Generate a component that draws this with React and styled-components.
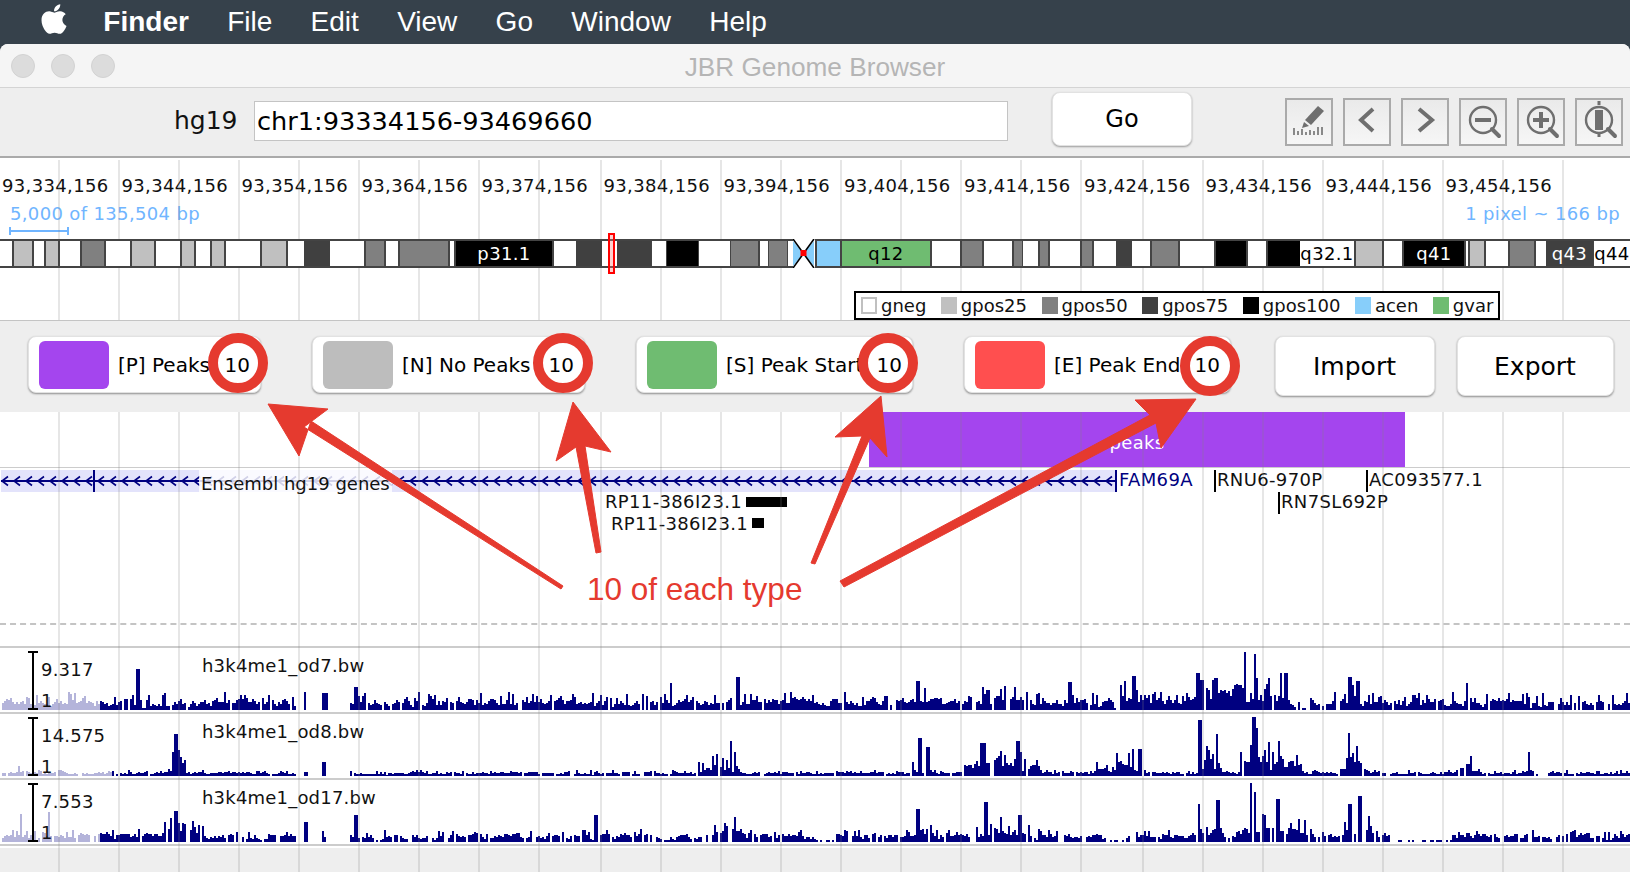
import React from "react";
import styled, { createGlobalStyle } from "styled-components";
import { FaApple } from "react-icons/fa";

const GlobalStyle = createGlobalStyle`
  html, body {
    margin: 0;
    height: 872px;
    overflow: hidden;
    background: #36414b;
  }
  * { box-sizing: border-box; }
`;

const SANS = `"DejaVu Sans", sans-serif`;
const HELV = `"Liberation Sans", Arial, sans-serif`;
const RED = "#e53a2f";

const Page = styled.div`
  width: 1630px;
  height: 872px;
  position: relative;
  overflow: hidden;
`;

const MenuBar = styled.div`
  height: 44px;
  display: flex;
  align-items: center;
  gap: 38.3px;
  padding-left: 37px;
  background: #36414b;
  color: #fff;
  font: 28px ${HELV};
  svg { margin-right: -6px; margin-top: -6px; }
`;

const MenuTitle = styled.span`
  font-weight: 700;
`;

const Window = styled.div`
  height: 828px;
  background: #fff;
  border-radius: 8px 8px 0 0;
  overflow: hidden;
`;

const TitleBar = styled.div`
  height: 44px;
  position: relative;
  display: flex;
  align-items: center;
  justify-content: center;
  background: #f5f5f5;
  border-bottom: 1px solid #d4d4d4;
  color: #b5b5b5;
  font: 26.2px ${HELV};
  padding-top: 3px;
`;

const Lights = styled.div`
  position: absolute;
  left: 11px;
  top: 10px;
  display: flex;
  gap: 16px;
`;

const Light = styled.span`
  width: 24px;
  height: 24px;
  border-radius: 50%;
  background: #dcdcdc;
  border: 1px solid #d2d2d2;
`;

const Toolbar = styled.div`
  height: 70px;
  display: flex;
  align-items: center;
  padding-left: 174px;
  background: #eee;
  border-bottom: 2px solid #aaa;
  font-family: ${SANS};
`;

const Genome = styled.span`
  font-size: 25px;
  width: 80px;
  color: #111;
  margin-bottom: 3px;
`;

const Locus = styled.div`
  width: 754px;
  height: 40px;
  display: flex;
  align-items: center;
  padding-left: 2px;
  margin-bottom: 2px;
  background: #fff;
  border: 1px solid #c4c4c4;
  font-size: 25.6px;
  color: #000;
`;

const GoButton = styled.div`
  width: 140px;
  height: 54px;
  margin: 0 0 6px 44px;
  display: flex;
  align-items: center;
  justify-content: center;
  background: #fff;
  border-radius: 8px;
  border: 1px solid #e2e2e2;
  box-shadow: 0 1px 2px rgba(0, 0, 0, 0.35);
  font-size: 24px;
  color: #000;
`;

const IconGroup = styled.div`
  display: flex;
  gap: 10px;
  margin-left: 93px;
`;

const IconButton = styled.div`
  width: 48px;
  height: 48px;
  border: 2px solid #aaa;
  background: linear-gradient(#eaeaea, #f6f6f6);
  svg { display: block; margin: -2px; }
`;

const Canvas = styled.div`
  position: relative;
  height: 714px;
  font: 18px ${SANS};
  letter-spacing: 0.35px;
  color: #111;
`;

const GridOverlay = styled.div`
  position: absolute;
  inset: 2px 0 0 0;
  z-index: 1;
  pointer-events: none;
`;

const GridLine = styled.span`
  position: absolute;
  top: 0;
  bottom: 0;
  width: 2px;
  background: rgba(128, 128, 128, 0.2);
`;

const Ruler = styled.div`
  height: 42px;
  padding: 17px 0 0 2px;
  display: flex;
  white-space: nowrap;
`;

const RulerTick = styled.span`
  flex: 0 0 ${(p) => p.$w}px;
`;

const ScaleRow = styled.div`
  position: relative;
  height: 39px;
  display: flex;
  justify-content: space-between;
  padding: 3px 10px 0 10px;
  color: #70b5ff;
`;

const ScaleBar = styled.span`
  position: absolute;
  left: 9px;
  top: 27px;
  width: 60px;
  height: 8px;
  border-left: 2px solid #70b5ff;
  border-right: 2px solid #70b5ff;
  &::after {
    content: "";
    position: absolute;
    left: 0;
    right: 0;
    top: 3px;
    height: 2px;
    background: #70b5ff;
  }
`;

const Ideogram = styled.div`
  position: relative;
  z-index: 2;
  height: 29px;
  display: flex;
  padding: 2px 0;
  background: #444;
`;

const BAND_COLORS = {
  w: ["#fff", "#000"],
  g25: ["#c0c0c0", "#000"],
  g50: ["#808080", "#000"],
  g75: ["#404040", "#fff"],
  k: ["#000", "#fff"],
  acen: ["#87cefa", "#000"],
  gvar: ["#6fbc71", "#000"],
};

const Band = styled.span`
  flex: none;
  display: flex;
  align-items: center;
  justify-content: center;
  overflow: hidden;
  white-space: nowrap;
  background: ${(p) => BAND_COLORS[p.$type][0]};
  color: ${(p) => BAND_COLORS[p.$type][1]};
`;

const Centromere = styled.svg`
  position: absolute;
  left: 793px;
  top: 0;
`;

const CytoMarker = styled.span`
  position: absolute;
  left: 608px;
  top: -6px;
  width: 7px;
  height: 41px;
  border: 2px solid #f00;
  background: rgba(255, 120, 120, 0.35);
`;

const LegendRow = styled.div`
  height: 52px;
  padding: 23px 0 0 854px;
  position: relative;
  z-index: 2;
  letter-spacing: 0;
`;

const Legend = styled.div`
  width: 646px;
  height: 29px;
  display: flex;
  align-items: center;
  padding-left: 5px;
  gap: 14.5px;
  background: #fff;
  border: 2px solid #000;
`;

const LegendItem = styled.span`
  display: flex;
  align-items: center;
  gap: 4px;
  line-height: 20px;
`;

const LegendSwatch = styled.i`
  width: 16px;
  height: 17px;
  background: ${(p) => BAND_COLORS[p.$type][0]};
  border: ${(p) => (p.$type === "w" ? "2px solid #c0c0c0" : "none")};
`;

const Panel = styled.div`
  position: relative;
  z-index: 3;
  height: 92px;
  display: flex;
  padding: 15px 0 0 28px;
  gap: 51px;
  background: #eee;
  border-top: 1px solid #c4c4c4;
  letter-spacing: 0;
`;

const PeakButton = styled.div`
  position: relative;
  width: ${(p) => p.$w}px;
  height: 57px;
  display: flex;
  align-items: center;
  padding-left: 10px;
  background: #fff;
  border-radius: 8px;
  border: 1px solid #e2e2e2;
  box-shadow: 0 1px 2px rgba(0, 0, 0, 0.4);
  font-size: 20px;
  color: #000;
  white-space: nowrap;
`;

const Swatch = styled.span`
  flex: none;
  width: 70px;
  height: 48px;
  margin-right: 9px;
  border-radius: 6px;
  background: ${(p) => p.$color};
`;

const Count = styled.span`
  position: absolute;
  right: 10px;
`;

const Ring = styled.span`
  position: absolute;
  right: ${(p) => p.$right}px;
  top: ${(p) => p.$top}px;
  width: 60px;
  height: 60px;
  border-radius: 50%;
  border: 10px solid ${RED};
`;

const ActionButton = styled.div`
  width: ${(p) => p.$w}px;
  height: 60px;
  margin-left: ${(p) => p.$ml}px;
  display: flex;
  align-items: center;
  justify-content: center;
  background: #fff;
  border-radius: 8px;
  border: 1px solid #e2e2e2;
  box-shadow: 0 1px 2px rgba(0, 0, 0, 0.4);
  font-size: 25px;
  color: #000;
`;

const PeakTrack = styled.div`
  height: 56px;
  padding-left: 869px;
  border-bottom: 1px solid #ccc;
`;

const PeakBar = styled.div`
  width: 536px;
  height: 55px;
  display: flex;
  align-items: flex-end;
  justify-content: center;
  padding-bottom: 14px;
  background: #a445ee;
  color: #fff;
`;

const GeneTrack = styled.div`
  position: relative;
  height: 157px;
  border-bottom: 2px dashed #c4c4c4;
`;

const GeneBand = styled.svg`
  position: absolute;
  left: 0;
  top: 2px;
`;

const TrackTitle = styled.span`
  position: absolute;
  left: 199px;
  top: 2px;
  width: 193px;
  padding: 4px 0 0 2px;
  height: 22px;
  line-height: 20px;
  letter-spacing: 0;
  white-space: nowrap;
  background: rgba(255, 255, 255, 0.82);
`;

const GeneLabel = styled.span`
  position: absolute;
  left: ${(p) => p.$x}px;
  top: ${(p) => p.$y}px;
  height: 22px;
  line-height: 20px;
  padding-left: ${(p) => (p.$tick ? 1 : 3)}px;
  white-space: nowrap;
  color: ${(p) => p.$color || "#111"};
  border-left: ${(p) => (p.$tick ? `2px solid ${p.$color || "#000"}` : "none")};
`;

const GeneBlock = styled.span`
  position: absolute;
  left: ${(p) => p.$x}px;
  top: ${(p) => p.$y}px;
  width: ${(p) => p.$w}px;
  height: 10px;
  background: #000;
`;

const Spacer = styled.div`
  height: 21px;
`;

const WigTrack = styled.div`
  position: relative;
  height: 66px;
  border-top: 2px solid #ccc;
  svg { display: block; position: absolute; left: 0; top: 0; }
`;

const RangeBar = styled.span`
  position: absolute;
  left: 28px;
  top: 3px;
  width: 10px;
  height: 59px;
  &::before {
    content: "";
    position: absolute;
    left: 4px;
    top: 0;
    bottom: 0;
    width: 2px;
    background: #000;
  }
  &::after {
    content: "";
    position: absolute;
    inset: 0;
    border-top: 2px solid #000;
    border-bottom: 2px solid #000;
  }
`;

const WigText = styled.span`
  position: absolute;
  left: ${(p) => p.$x}px;
  top: ${(p) => p.$y}px;
  line-height: 20px;
  letter-spacing: 0.2px;
  white-space: nowrap;
`;

const BottomBar = styled.div`
  height: 29px;
  border-top: 2px solid #ccc;
  background: linear-gradient(#fff 2px, #eee 2px);
`;

const Annotations = styled.svg`
  position: absolute;
  inset: 0;
  z-index: 5;
  pointer-events: none;
`;

const Callout = styled.div`
  position: absolute;
  left: 587px;
  top: 569px;
  z-index: 6;
  font: 31.5px/40px ${HELV};
  color: ${RED};
  white-space: nowrap;
  text-shadow: 0 0 6px #fff, 0 0 6px #fff;
`;

const TICKS = [
  "93,334,156", "93,344,156", "93,354,156", "93,364,156", "93,374,156",
  "93,384,156", "93,394,156", "93,404,156", "93,414,156", "93,424,156",
  "93,434,156", "93,444,156", "93,454,156",
];
const TICK_WIDTHS = [119.5, 120, 120, 120, 122, 120, 120.5, 120, 120, 121.5, 120, 120, 120];

const GRID_X = [
  59, 119, 179, 239, 299, 359, 419, 479, 539, 601, 661, 721, 781, 841, 901, 961,
  1021, 1081, 1143, 1203, 1263, 1323, 1383, 1443, 1503, 1563,
];

const BANDS = [
  [0, 12, "w"], [14, 32, "g25"], [34, 44, "w"], [46, 58, "g25"], [60, 80, "w"],
  [82, 104, "g50"], [106, 130, "w"], [132, 154, "g25"], [156, 180, "w"], [182, 194, "g25"],
  [196, 210, "w"], [212, 224, "g25"], [226, 260, "w"], [262, 286, "g25"], [288, 304, "w"],
  [304, 330, "g75"], [330, 364, "w"], [366, 384, "g50"], [386, 398, "w"], [400, 448, "g50"],
  [450, 454, "w"], [456, 552, "k", "p31.1"], [554, 576, "w"], [576, 602, "g75"], [602, 617, "w"],
  [617, 651, "g75"], [652, 666, "w"], [667, 698, "k"], [699, 730, "w"], [731, 758, "g50"],
  [760, 768, "w"], [769, 787, "g50"], [788, 793, "w"], [817, 840, "acen"], [842, 930, "gvar", "q12"],
  [932, 960, "w"], [962, 982, "g50"], [984, 1012, "w"], [1014, 1022, "g50"], [1023, 1038, "w"],
  [1040, 1048, "g50"], [1050, 1080, "w"], [1082, 1092, "g50"], [1094, 1116, "w"], [1116, 1132, "g75"],
  [1132, 1150, "w"], [1152, 1178, "g50"], [1180, 1214, "w"], [1216, 1246, "k"], [1248, 1266, "w"],
  [1268, 1300, "k"], [1300, 1354, "w", "q32.1"], [1356, 1382, "g25"], [1384, 1402, "w"],
  [1404, 1464, "k", "q41"], [1466, 1468, "w"], [1470, 1484, "g25"], [1486, 1508, "w"],
  [1510, 1534, "g50"], [1536, 1546, "w"], [1546, 1593, "g75", "q43"], [1594, 1630, "w", "q44"],
];

const LEGEND = [
  ["w", "gneg"], ["g25", "gpos25"], ["g50", "gpos50"], ["g75", "gpos75"],
  ["k", "gpos100"], ["acen", "acen"], ["gvar", "gvar"],
];

const PEAK_BUTTONS = [
  { w: 233, color: "#a445ee", label: "[P] Peaks", count: 10, ring: 23, top: -4 },
  { w: 273, color: "#bdbdbd", label: "[N] No Peaks", count: 10, ring: 22, top: -4 },
  { w: 277, color: "#6fbc71", label: "[S] Peak Start", count: 10, ring: 25, top: -4 },
  { w: 267, color: "#ff4f4f", label: "[E] Peak End", count: 10, ring: 21, top: -1 },
];

// rough shape of each signal track: low noise plus clusters and single spikes
const WIGGLES = [
  {
    seed: 7, name: "h3k4me1_od7.bw", max: "9.317", pale: 100, base: 17, holes: 0.08,
    clusters: [[940, 1060, 24], [1110, 1160, 30], [1190, 1300, 38], [1340, 1370, 26]],
    sparse: [[892, 895], [1113, 1118], [1300, 1308]],
    spikes: [[137, 41], [304, 18], [322, 17], [325, 17], [355, 23], [670, 27], [737, 33], [917, 29], [924, 22], [1069, 28], [1133, 34], [1124, 29], [1197, 37], [1201, 30], [1215, 32], [1244, 58], [1254, 56], [1280, 37], [1285, 37], [1349, 33], [1357, 29], [1466, 27]],
  },
  {
    seed: 23, name: "h3k4me1_od8.bw", max: "14.575", pale: 111, base: 5, holes: 0.08,
    clusters: [[8, 30, 10], [168, 185, 32], [695, 745, 22], [910, 935, 22], [962, 1040, 28], [1095, 1145, 24], [1197, 1220, 34], [1240, 1300, 42], [1340, 1365, 28], [1450, 1480, 12], [1520, 1535, 16]],
    sparse: [[1385, 1390], [1535, 1545]],
    spikes: [[172, 24], [175, 42], [177, 26], [304, 4], [306, 4], [322, 14], [324, 14], [730, 35], [734, 24], [919, 38], [927, 29], [981, 33], [984, 33], [1017, 35], [1132, 27], [1139, 27], [1199, 56], [1216, 42], [1253, 59], [1256, 48], [1348, 43], [1356, 30], [1470, 20], [1528, 24]],
  },
  {
    seed: 41, name: "h3k4me1_od17.bw", max: "7.553", pale: 99, base: 12, holes: 0.2,
    clusters: [[160, 205, 30], [700, 745, 24], [910, 935, 26], [960, 1040, 24], [1197, 1222, 24], [1240, 1310, 36], [1340, 1375, 38]],
    sparse: [[815, 835], [1110, 1125], [1390, 1450]],
    spikes: [[20, 28], [48, 30], [175, 31], [305, 20], [322, 11], [355, 27], [595, 27], [734, 25], [917, 33], [985, 40], [1019, 27], [1198, 38], [1217, 42], [1250, 59], [1254, 50], [1277, 43], [1359, 46], [1349, 38]],
  },
];

const GAPS = [[296, 304], [306, 320], [326, 348]];

function buildWiggle({ seed, base, clusters, spikes, sparse, pale, holes }) {
  let state = seed * 9973 + 13;
  const rand = () => {
    state = (state * 16807) % 2147483647;
    return state / 2147483647;
  };
  let dark = "";
  let light = "";
  let level = 0.4;
  for (let x = 2; x < 1630; x += 2) {
    let amp = base;
    clusters.forEach(([a, b, h]) => {
      if (x >= a && x <= b) {
        amp = Math.max(amp, h * (0.55 + 0.45 * Math.sin(((x - a) / (b - a)) * Math.PI)));
      }
    });
    // neighbouring bins follow each other, with a thin spike every so often
    level = 0.5 * level + 0.5 * rand();
    const kick = rand() < 0.25 ? 0.5 + rand() * 0.5 : level * 0.75;
    let h = rand() < holes ? 0 : Math.round(1 + amp * kick);
    if (GAPS.some(([a, b]) => x >= a && x <= b)) h = 0;
    if (sparse.some(([a, b]) => x >= a && x <= b)) h = Math.min(h, rand() < 0.5 ? 0 : 2);
    const spike = spikes.find(([sx]) => Math.abs(sx - x) <= 1);
    if (spike) h = spike[1];
    if (h > 0) {
      const seg = `M${x} ${62 - h}h2V62h-2z`;
      if (x < pale) light += seg;
      else dark += seg;
    }
  }
  return { dark, light };
}

const chevrons = [];
for (let x = 2; x < 1114; x += 12) {
  chevrons.push(`M${x + 6} 6.5L${x} 11L${x + 6} 15.5`);
}

const GENE_PATH = chevrons.join("");

const PencilIcon = () => (
  <svg width="48" height="48" viewBox="0 0 48 48">
    <path d="M33 8l6 5-13 14-6-5z" fill="#6f6f6f" />
    <path d="M19 24l5 4-7 2z" fill="#6f6f6f" />
    <path d="M9 30v7M13 33v4M17 31v6M21 34v3M25 32v5M29 33v4M33 29v8M37 29v8" stroke="#6f6f6f" strokeWidth="1.6" />
  </svg>
);

const ChevronIcon = ({ d }) => (
  <svg width="48" height="48" viewBox="0 0 48 48">
    <path d={d} fill="none" stroke="#6f6f6f" strokeWidth="4" />
  </svg>
);

const ZoomIcon = ({ children }) => (
  <svg width="48" height="48" viewBox="0 0 48 48">
    <circle cx="24" cy="22" r="13" fill="none" stroke="#6f6f6f" strokeWidth="2.4" />
    <path d="M33 31l7 7" stroke="#6f6f6f" strokeWidth="4" strokeLinecap="round" />
    {children}
  </svg>
);

const Arrow = ({ tail, neckA, neckB, wingA, tip, wingB }) => (
  <g fill={RED} stroke={RED} strokeLinejoin="round">
    <polygon points={`${neckA} ${wingA} ${tip} ${wingB} ${neckB} ${tail}`} strokeWidth="1" />
  </g>
);

export default function App() {
  let prevEnd = 0;
  return (
    <Page>
      <GlobalStyle />
      <MenuBar>
        <FaApple size={34} />
        <MenuTitle>Finder</MenuTitle>
        <span>File</span>
        <span>Edit</span>
        <span>View</span>
        <span>Go</span>
        <span>Window</span>
        <span>Help</span>
      </MenuBar>
      <Window>
        <TitleBar>
          <Lights>
            <Light />
            <Light />
            <Light />
          </Lights>
          JBR Genome Browser
        </TitleBar>
        <Toolbar>
          <Genome>hg19</Genome>
          <Locus>chr1:93334156-93469660</Locus>
          <GoButton>Go</GoButton>
          <IconGroup>
            <IconButton><PencilIcon /></IconButton>
            <IconButton><ChevronIcon d="M30 11L18 22l12 11" /></IconButton>
            <IconButton><ChevronIcon d="M18 11l13 11-13 11" /></IconButton>
            <IconButton>
              <ZoomIcon><path d="M16 22h16" stroke="#6f6f6f" strokeWidth="4" /></ZoomIcon>
            </IconButton>
            <IconButton>
              <ZoomIcon><path d="M16 22h16M24 14v16" stroke="#6f6f6f" strokeWidth="4" /></ZoomIcon>
            </IconButton>
            <IconButton>
              <ZoomIcon>
                <rect x="20" y="12" width="8" height="20" fill="#6f6f6f" />
                <path d="M24 3v4M24 36v3" stroke="#6f6f6f" strokeWidth="3" />
              </ZoomIcon>
            </IconButton>
          </IconGroup>
        </Toolbar>
        <Canvas>
          <GridOverlay>
            {GRID_X.map((x) => (
              <GridLine key={x} style={{ left: x - 1 }} />
            ))}
          </GridOverlay>
          <Ruler>
            {TICKS.map((t, i) => (
              <RulerTick key={t} $w={TICK_WIDTHS[i]}>{t}</RulerTick>
            ))}
          </Ruler>
          <ScaleRow>
            <span>5,000 of 135,504 bp</span>
            <span>1 pixel ~ 166 bp</span>
            <ScaleBar />
          </ScaleRow>
          <Ideogram>
            {BANDS.map(([a, b, type, label]) => {
              const gap = a - prevEnd;
              prevEnd = b;
              return (
                <Band key={a} $type={type} style={{ width: b - a, marginLeft: gap }}>
                  {label}
                </Band>
              );
            })}
            <Centromere width="24" height="29" viewBox="0 0 24 29">
              <rect width="24" height="29" fill="#fff" />
              <path d="M0 2l10.500 12.500L0 27zM21 2L10.500 14.500 21 27z" fill="#87cefa" />
              <path d="M0 0l21 29M21 0L0 29" stroke="#000" strokeWidth="1.6" />
              <rect x="7.500" y="11" width="6" height="6" fill="#f00" />
              <rect x="22" width="2" height="29" fill="#444" />
            </Centromere>
            <CytoMarker />
          </Ideogram>
          <LegendRow>
            <Legend>
              {LEGEND.map(([type, label]) => (
                <LegendItem key={label}>
                  <LegendSwatch $type={type} />
                  {label}
                </LegendItem>
              ))}
            </Legend>
          </LegendRow>
          <Panel>
            {PEAK_BUTTONS.map((b) => (
              <PeakButton key={b.label} $w={b.w}>
                <Swatch $color={b.color} />
                {b.label}
                <Count>{b.count}</Count>
                <Ring $right={b.ring - 31} $top={b.top} />
              </PeakButton>
            ))}
            <ActionButton $w={160} $ml={-7.5}>Import</ActionButton>
            <ActionButton $w={157} $ml={-29}>Export</ActionButton>
          </Panel>
          <PeakTrack>
            <PeakBar>peaks</PeakBar>
          </PeakTrack>
          <GeneTrack>
            <GeneBand width="1118" height="22" viewBox="0 0 1118 22">
              <rect x="1" width="1116" height="22" fill="#e3e3fb" />
              <path d="M1 11H1116" stroke="#000080" strokeWidth="2" />
              <path d={GENE_PATH} fill="none" stroke="#000080" strokeWidth="1.6" />
              <path d="M94 0v22M1116 0v22" stroke="#000080" strokeWidth="2" />
            </GeneBand>
            <TrackTitle>Ensembl hg19 genes</TrackTitle>
            <GeneLabel $x={1116} $y={2} $color="#000080">FAM69A</GeneLabel>
            <GeneLabel $x={1214} $y={2} $tick>RNU6-970P</GeneLabel>
            <GeneLabel $x={1366} $y={2} $tick>AC093577.1</GeneLabel>
            <GeneLabel $x={1278} $y={24} $tick>RN7SL692P</GeneLabel>
            <GeneLabel $x={602} $y={24}>RP11-386I23.1</GeneLabel>
            <GeneBlock $x={746} $y={29} $w={41} />
            <GeneLabel $x={608} $y={46}>RP11-386I23.1</GeneLabel>
            <GeneBlock $x={752} $y={50} $w={12} />
          </GeneTrack>
          <Spacer />
          {WIGGLES.map((t) => {
            const { dark, light } = buildWiggle(t);
            return (
              <WigTrack key={t.name}>
                <svg width="1630" height="64" viewBox="0 0 1630 64" shapeRendering="crispEdges">
                  <path d={light} fill="#b4b4da" />
                  <path d={dark} fill="#000080" />
                </svg>
                <RangeBar />
                <WigText $x={41} $y={12}>{t.max}</WigText>
                <WigText $x={41} $y={43}>1</WigText>
                <WigText $x={202} $y={8}>{t.name}</WigText>
              </WigTrack>
            );
          })}
          <BottomBar />
        </Canvas>
      </Window>

      <Annotations width="1630" height="872" viewBox="0 0 1630 872">
        <Arrow tail="563,586 561,589" neckA="304,427" neckB="311,421" wingA="328,409" tip="268,404" wingB="299,456" />
        <Arrow tail="601,552 596,553" neckA="576,447" neckB="585,446" wingA="556,461" tip="573,402" wingB="611,452" />
        <Arrow tail="815,564 811,563" neckA="862,436" neckB="870,438" wingA="835,437" tip="881,396" wingB="887,457" />
        <Arrow tail="844,587 840,581" neckA="1150,415" neckB="1156,423" wingA="1135,400" tip="1196,399" wingB="1161,448" />
      </Annotations>
      <Callout>10 of each type</Callout>
    </Page>
  );
}
